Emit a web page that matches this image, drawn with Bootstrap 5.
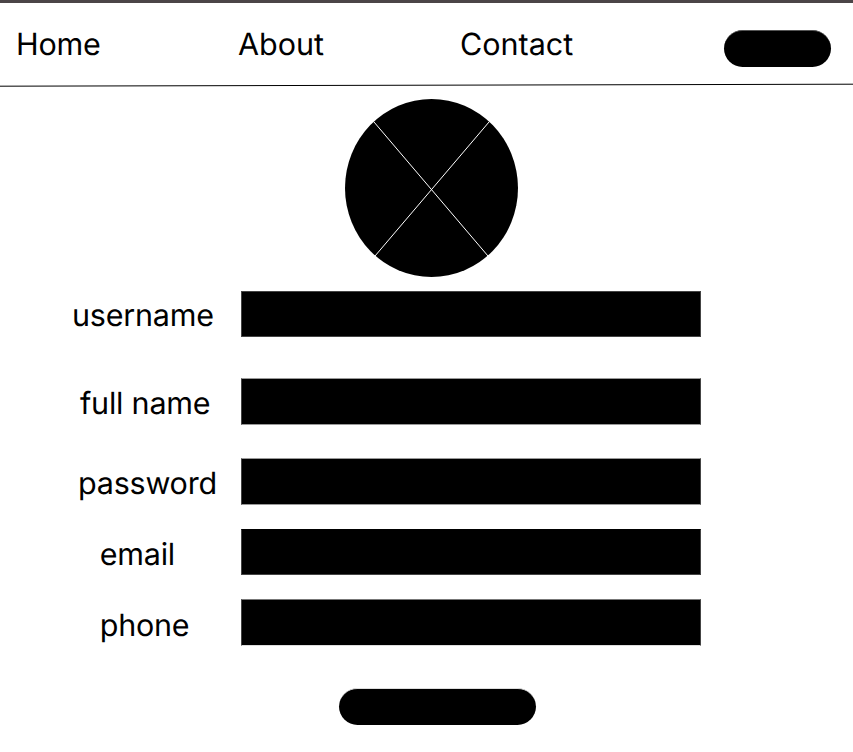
<!DOCTYPE html>
<html lang="en"><head><meta charset="utf-8"><meta name="viewport" content="width=device-width, initial-scale=1"><title>Profile</title>
<link href="https://cdn.jsdelivr.net/npm/bootstrap@5.3.0/dist/css/bootstrap.min.css" rel="stylesheet">
<style>
body{font-family:Inter,sans-serif;font-size:30.5px;line-height:38px;font-weight:400;text-rendering:geometricPrecision;color:#000;height:752px;overflow:hidden}
.topbar{height:87px;border-top:3px solid #4b4547;padding:23px 22px 0 16px}
.topbar a{color:#000;text-decoration:none;width:222px}
.topbar a:first-child{letter-spacing:-.2px}
.topbar .pill{margin-top:4px}
.rule{height:4px;margin-top:-4px}
.pill{width:107px;height:37px;background:#000;border:0;border-top:1px solid #555;border-radius:19px}
.avatar{width:173px;height:178px;margin:12px 0 0 345px}
.form-line{height:47px}
.form-line label{width:241px;white-space:nowrap;padding-top:7px;letter-spacing:-.22px}
.field{width:460px;height:47px;background:#000;border:1px solid #444;border-radius:0;padding:0;color:#fff}
.username{margin-top:14px}
.fullname{margin-top:40px}
.password{margin-top:33px}
.email{margin-top:24px}
.phone{margin-top:23px}
.username .field,.email .field{height:46px}
.username label{padding:6px 0 0 72px}
.fullname label{padding-left:80px}
.password label{padding-left:78px}
.email label,.phone label{padding-left:99.7px}
.phone label{padding-top:8px}
.fullname .field,.password .field{border-top-color:#999;border-bottom-color:#999}
.email .field{border-top-color:#000}
.phone .field{border-top-color:#777;border-bottom-color:#ddd}
.save{width:197px;margin:42px 0 0 339px;border-top-color:#ddd}
</style></head>
<body>
<nav class="topbar d-flex align-items-start"><a href="#">Home</a><a href="#">About</a><a href="#">Contact</a><button class="pill ms-auto" aria-label="Account"></button></nav>
<svg class="rule d-block w-100" viewBox="0 0 853 4" preserveAspectRatio="none"><path d="M0 3.2L853 1.2" stroke="#000"/></svg>
<main>
<svg class="avatar d-block" viewBox="0 0 173 178"><ellipse cx="86.5" cy="89" rx="86.5" ry="89"/><path d="M29 23L143 157M144 23L30 157" stroke="#fff"/></svg>
<form>
<div class="form-line username d-flex"><label for="username">username</label><input class="field" id="username"></div>
<div class="form-line fullname d-flex"><label for="fullname">full name</label><input class="field" id="fullname"></div>
<div class="form-line password d-flex"><label for="password">password</label><input type="password" class="field" id="password"></div>
<div class="form-line email d-flex"><label for="email">email</label><input type="email" class="field" id="email"></div>
<div class="form-line phone d-flex"><label for="phone">phone</label><input type="tel" class="field" id="phone"></div>
<button type="submit" class="pill save d-block" aria-label="Save"></button>
</form>
</main>
<script src="https://cdn.jsdelivr.net/npm/bootstrap@5.3.0/dist/js/bootstrap.bundle.min.js"></script>
</body></html>
